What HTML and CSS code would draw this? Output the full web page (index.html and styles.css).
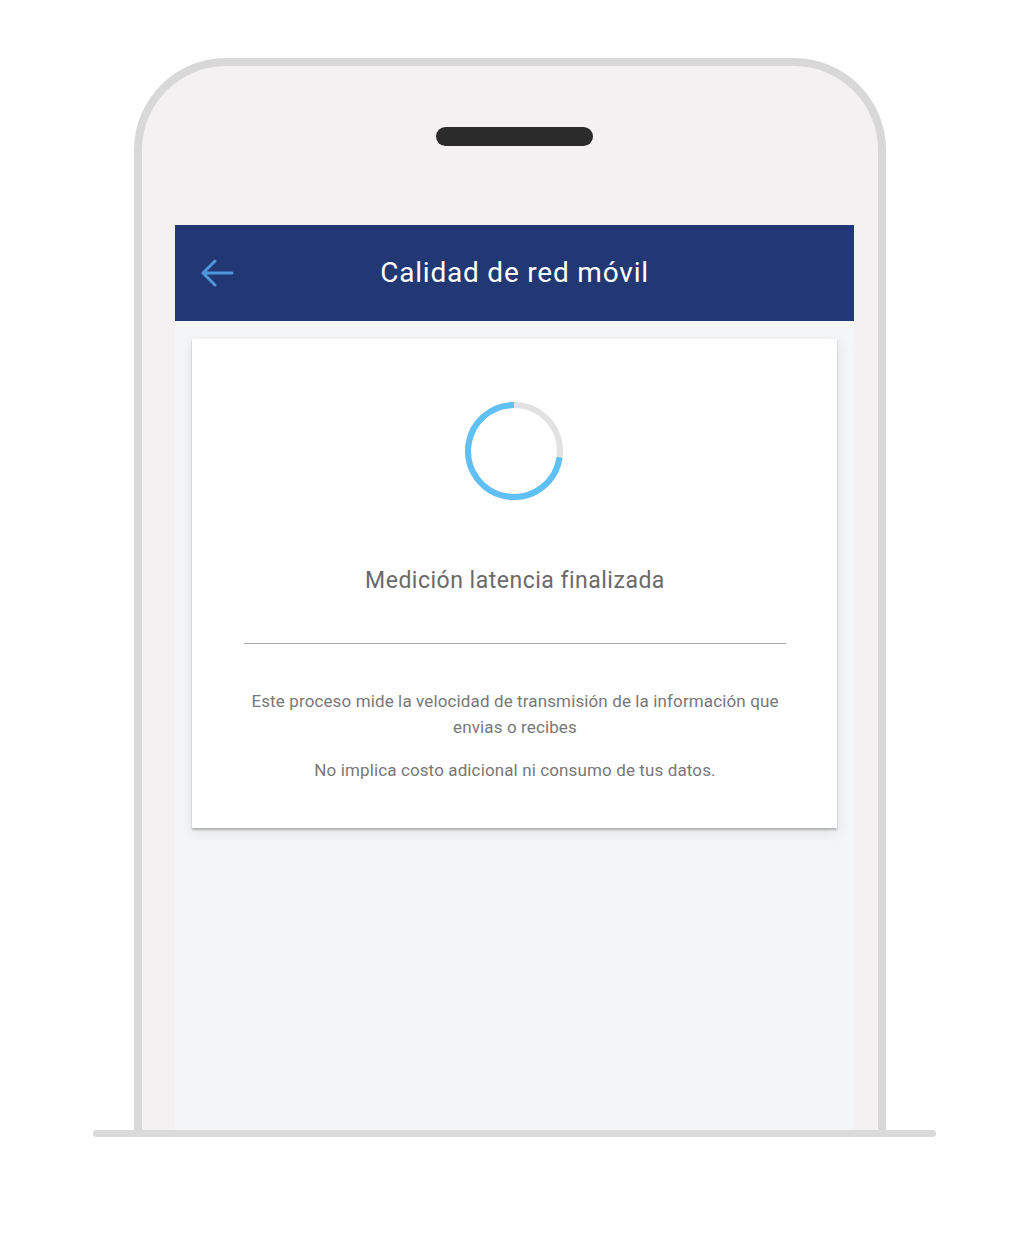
FILE: index.html
```html
<!DOCTYPE html>
<html lang="es">
<head>
<meta charset="utf-8">
<title>Calidad de red móvil</title>
<link rel="stylesheet" href="styles.css">
</head>
<body>
<div class="stage">
  <div class="phone">
    <div class="speaker"></div>
    <div class="screen">
      <header class="appbar">
        <svg class="back" viewBox="0 0 36 30" width="36" height="30" aria-hidden="true">
          <path d="M33 15 H4 M16 3 L4 15 L16 27" fill="none" stroke="#4f97dc" stroke-width="3" stroke-linecap="round" stroke-linejoin="round"/>
        </svg>
        <h1 class="title">Calidad de red móvil</h1>
      </header>
      <main class="content">
        <section class="card">
          <svg class="spinner" viewBox="0 0 100 100" width="100" height="100" aria-hidden="true">
            <circle cx="50" cy="50" r="46" fill="none" stroke="#e2e2e2" stroke-width="6"/>
            <circle cx="50" cy="50" r="46" fill="none" stroke="#5ec0f4" stroke-width="6" stroke-dasharray="210 400" transform="rotate(8 50 50)"/>
          </svg>
          <p class="status">Medición latencia finalizada</p>
          <hr class="divider">
          <p class="info">Este proceso mide la velocidad de transmisión de la información que envias o recibes</p>
          <p class="info note">No implica costo adicional ni consumo de tus datos.</p>
        </section>
      </main>
    </div>
  </div>
  <div class="base"></div>
</div>
</body>
</html>
```

FILE: styles.css
```css
* { box-sizing: border-box; }
html, body { margin: 0; padding: 0; background: #ffffff; }
body { font-family: Roboto, "Liberation Sans", Arial, sans-serif; }

.stage {
  width: 1030px;
  height: 1234px;
  padding-top: 58px;
  display: flex;
  flex-direction: column;
}

.phone {
  margin-left: 134px;
  width: 752px;
  height: 1072px;
  border: 8px solid #d8d8d8;
  border-bottom: none;
  border-radius: 92px 92px 0 0;
  background: #f3f1f2;
  display: flex;
  flex-direction: column;
}

.speaker {
  margin: 61px 0 0 294px;
  width: 157px;
  height: 19px;
  border-radius: 10px;
  background: #2b2b2b;
}

.screen {
  margin: 79px 0 0 33px;
  width: 679px;
  flex: 1;
  background: #f4f5f7;
  display: flex;
  flex-direction: column;
}

.appbar {
  height: 96px;
  background: #213874;
  display: flex;
  align-items: center;
  position: relative;
  justify-content: center;
}

.back {
  position: absolute;
  left: 24px;
  top: 33px;
}

.title {
  margin: 0 0 2px 0;
  font-weight: 400;
  font-size: 28px;
  color: #ffffff;
  letter-spacing: 0.8px;
}

.content {
  padding: 18px 17px 0 17px;
}

.card {
  background: #ffffff;
  height: 489px;
  box-shadow: 0 2px 2px rgba(0,0,0,0.25), 0 4px 14px rgba(0,0,0,0.08);
  display: flex;
  flex-direction: column;
  align-items: center;
  padding: 62px 51px 0 52px;
}

.spinner { display: block; margin-left: -2px; }

.status {
  margin: 67px 0 0 0;
  font-size: 23px;
  line-height: 26px;
  color: #6a6a6a;
  letter-spacing: 0.5px;
}

.divider {
  width: 100%;
  margin: 49px 0 0 0;
  border: none;
  border-top: 1px solid #a9a9a9;
  height: 0;
}

.info {
  margin: 44px 0 0 0;
  font-size: 17px;
  line-height: 26px;
  color: #787878;
  text-align: center;
  letter-spacing: 0.12px;
}

.note { margin-top: 17px; }

.base {
  margin: 0 0 0 93px;
  width: 843px;
  height: 7px;
  border-radius: 4px;
  background: #dadada;
}
```
